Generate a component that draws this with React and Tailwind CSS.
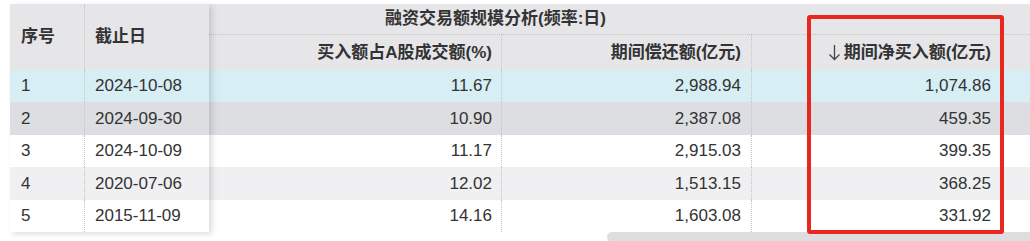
import React from 'react'

const rows = [
  { no: '1', date: '2024-10-08', pct: '11.67', repay: '2,988.94', net: '1,074.86', bg: 'bg-[#d6eef4]' },
  { no: '2', date: '2024-09-30', pct: '10.90', repay: '2,387.08', net: '459.35', bg: 'bg-[#dddee2]' },
  { no: '3', date: '2024-10-09', pct: '11.17', repay: '2,915.03', net: '399.35', bg: 'bg-white' },
  { no: '4', date: '2020-07-06', pct: '12.02', repay: '1,513.15', net: '368.25', bg: 'bg-[#f0f0f2]' },
  { no: '5', date: '2015-11-09', pct: '14.16', repay: '1,603.08', net: '331.92', bg: 'bg-white' },
]

const font = { fontFamily: '"Liberation Sans", "Noto Sans CJK SC", sans-serif' }

function SortDown() {
  return (
    <svg width="13" height="17" viewBox="0 0 13 17" className="mr-[3px]">
      <path d="M6.5 1 V15.5 M1.5 10.5 L6.5 15.5 L11.5 10.5" fill="none" stroke="#444" strokeWidth="1.3" />
    </svg>
  )
}

export default function App() {
  return (
    <div
      className="w-[1030px] h-[241px] bg-white overflow-hidden relative pt-1 pl-[10px] text-[17px] text-[#333]"
      style={font}
    >
      <div className="flex">
        {/* Frozen columns */}
        <div className="w-[199px] shrink-0 relative z-10 shadow-[3px_2px_6px_rgba(0,0,0,0.14)]">
          <div className="h-[66px] bg-[#e6e6e9] flex font-bold">
            <div className="w-[75px] pl-[11px] flex items-center border-r border-dotted border-[#c4c4c8]">序号</div>
            <div className="flex-1 pl-[10px] flex items-center">截止日</div>
          </div>
          {rows.map((r) => (
            <div key={r.no} className={`h-[32.4px] flex ${r.bg}`}>
              <div className="w-[75px] pl-[11px] flex items-center border-r border-dotted border-[#c4c4c8]">{r.no}</div>
              <div className="flex-1 pl-[10px] flex items-center">{r.date}</div>
            </div>
          ))}
        </div>

        {/* Scrollable columns */}
        <div className="flex-1 min-w-0">
          <div className="h-[66px] bg-[#e6e6e9] flex flex-col font-bold">
            <div className="h-[31px] flex items-center pl-[176px] border-b border-dotted border-[#c4c4c8]">
              融资交易额规模分析(频率:日)
            </div>
            <div className="flex-1 flex">
              <div className="w-[293px] shrink-0 flex items-center justify-end pr-[9px] border-r border-dotted border-[#c4c4c8]">
                买入额占A股成交额(%)
              </div>
              <div className="w-[250px] shrink-0 flex items-center justify-end pr-[10px] border-r border-dotted border-[#c4c4c8]">
                期间偿还额(亿元)
              </div>
              <div className="w-[250px] shrink-0 flex items-center justify-end pr-[10px] border-r border-dotted border-[#c4c4c8]">
                <SortDown />期间净买入额(亿元)
              </div>
              <div className="flex-1" />
            </div>
          </div>
          {rows.map((r) => (
            <div key={r.no} className={`h-[32.4px] flex ${r.bg}`}>
              <div className="w-[293px] shrink-0 flex items-center justify-end pr-[9px] border-r border-dotted border-[#c4c4c8]">{r.pct}</div>
              <div className="w-[250px] shrink-0 flex items-center justify-end pr-[10px] border-r border-dotted border-[#c4c4c8]">{r.repay}</div>
              <div className="w-[250px] shrink-0 flex items-center justify-end pr-[10px] border-r border-dotted border-[#c4c4c8]">{r.net}</div>
              <div className="flex-1" />
            </div>
          ))}
        </div>
      </div>

      {/* horizontal scrollbar thumb */}
      <div className="ml-[597px] h-[10px] bg-[#dedee0] rounded-l-full" />

      {/* red highlight box */}
      <div className="absolute left-[807px] top-[15px] w-[197px] h-[219px] border-[4px] border-[#e8281f] rounded-[3px] z-20" />
    </div>
  )
}
